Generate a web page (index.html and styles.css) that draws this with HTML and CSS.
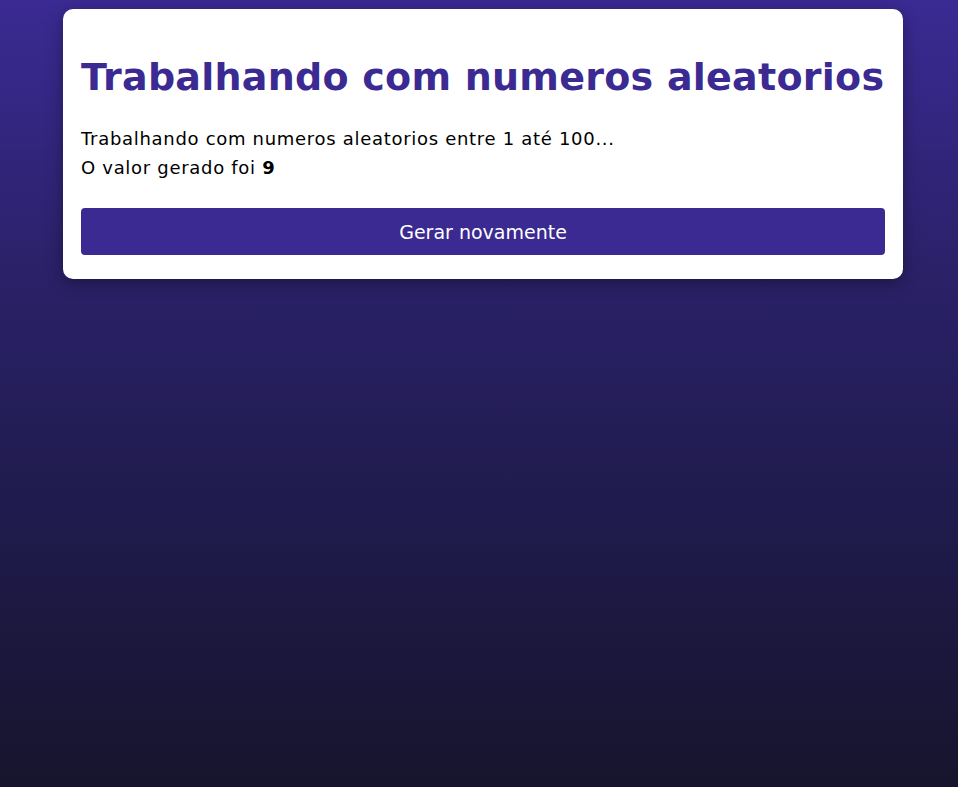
FILE: index.html
```html
<!DOCTYPE html>
<html lang="pt-BR">
<head>
<meta charset="utf-8">
<title>Números aleatórios</title>
<link rel="stylesheet" href="styles.css">
</head>
<body>
<main class="card">
  <h1 class="title">Trabalhando com numeros aleatorios</h1>
  <p class="text">Trabalhando com numeros aleatorios entre 1 até 100...<br>O valor gerado foi <strong>9</strong></p>
  <button class="btn" type="button">Gerar novamente</button>
</main>
</body>
</html>
```
FILE: styles.css
```css
html {
  min-height: 100%;
  background: linear-gradient(to bottom, #3a2a93 0%, #2a2168 35%, #1e1a48 70%, #17142d 100%);
}
body {
  margin: 0;
  padding: 9px 0 0 8px;
  font-family: "DejaVu Sans", Verdana, sans-serif;
  min-height: 787px;
  box-sizing: border-box;
}
.card {
  display: block;
  box-sizing: border-box;
  width: 840px;
  margin: 0 auto;
  background: #fff;
  border-radius: 10px;
  padding: 18px 18px 24px;
  box-shadow: 0 4px 16px rgba(0, 0, 0, 0.35);
}
.title {
  color: #3a2a91;
  font-size: 38px;
  letter-spacing: 0.25px;
  font-weight: bold;
  margin: 28px 0 25px;
  white-space: nowrap;
}
.text {
  font-size: 18px;
  letter-spacing: 0.7px;
  line-height: 29px;
  color: #000;
  margin: 0 0 26px;
}
.btn {
  display: block;
  width: 100%;
  height: 47px;
  border: none;
  border-radius: 4px;
  background: #3a2a91;
  color: #fff;
  font-family: "DejaVu Sans", Verdana, sans-serif;
  font-size: 19px;
}
```
